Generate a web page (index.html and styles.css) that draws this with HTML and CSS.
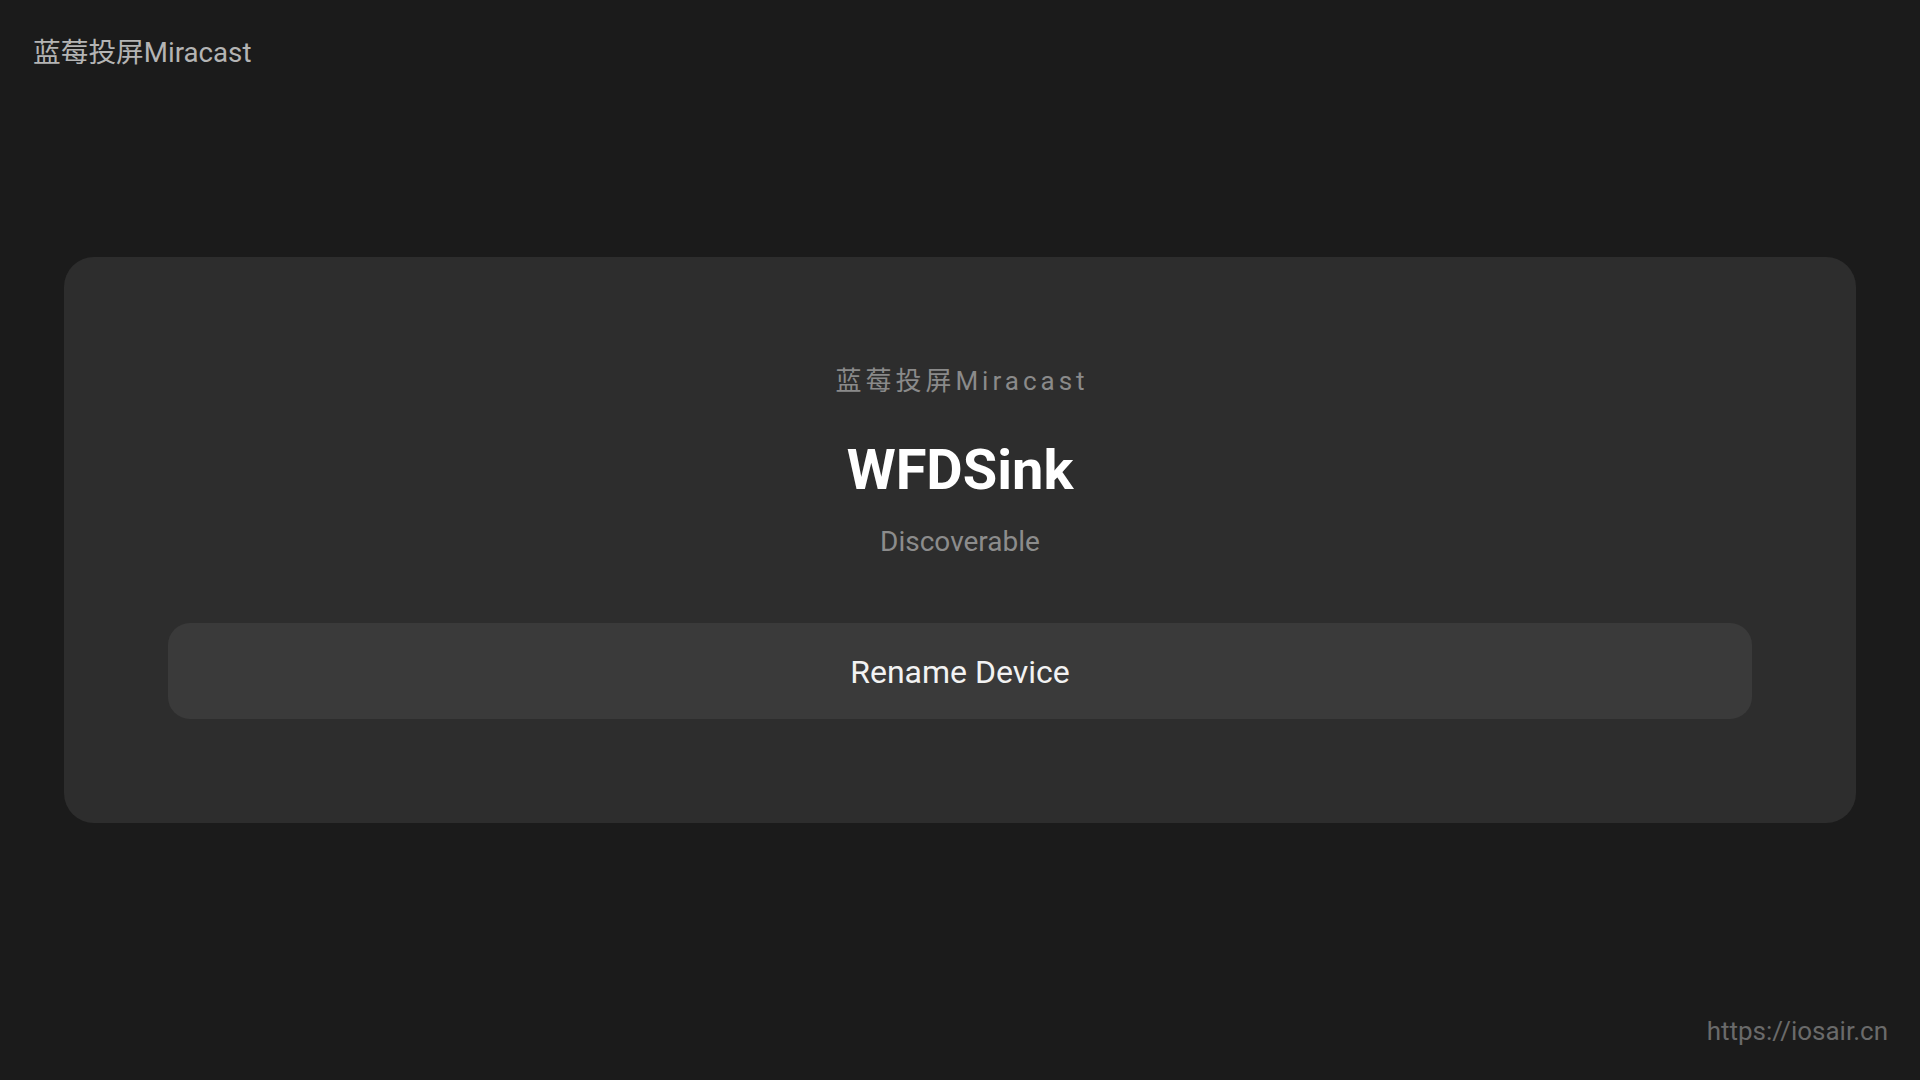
FILE: index.html
```html
<!DOCTYPE html>
<html lang="zh-CN">
<head>
<meta charset="utf-8">
<title>蓝莓投屏Miracast</title>
<link rel="stylesheet" href="styles.css">
</head>
<body>
<div class="page">
  <header class="topbar">
    <div class="app-title">蓝莓投屏Miracast</div>
  </header>
  <main class="card">
    <div class="card-sub">蓝莓投屏Miracast</div>
    <div class="device-name">WFDSink</div>
    <div class="device-status">Discoverable</div>
    <button class="rename-btn">Rename Device</button>
  </main>
  <footer class="footer">
    <span class="footer-link">https://iosair.cn</span>
  </footer>
</div>
</body>
</html>
```

FILE: styles.css
```css
* { box-sizing: border-box; }
html, body {
  margin: 0;
  padding: 0;
  background: #1b1b1b;
  font-family: Roboto, "Noto Sans CJK SC", sans-serif;
}
.page {
  height: 100vh;
  display: flex;
  flex-direction: column;
}
.topbar {
  padding: 35px 33px 0;
}
.app-title {
  font-size: 27.7px;
  line-height: 36px;
  color: #b4b4b4;
}
.card {
  margin: 186px 64px 0;
  height: 566px;
  background: #2d2d2d;
  border-radius: 30px;
  padding: 108px 104px 104px;
  display: flex;
  flex-direction: column;
  align-items: center;
}
.card-sub {
  font-size: 26px;
  line-height: 32px;
  letter-spacing: 4px;
  padding-left: 4px;
  color: #8a8a8a;
}
.device-name {
  margin-top: 41px;
  font-size: 56px;
  line-height: 64px;
  font-weight: 700;
  color: #ffffff;
}
.device-status {
  margin-top: 23px;
  font-size: 28px;
  line-height: 34px;
  color: #8c8c8c;
}
.rename-btn {
  margin-top: 64px;
  width: 100%;
  height: 96px;
  border: none;
  border-radius: 22px;
  background: #3a3a3a;
  color: #f2f2f2;
  font-family: Roboto, "Noto Sans CJK SC", sans-serif;
  font-size: 32px;
  line-height: 98px;
  padding: 0;
}
.footer {
  margin-top: auto;
  display: flex;
  justify-content: flex-end;
  padding: 0 32px 32px;
}
.footer-link {
  font-size: 26px;
  line-height: 34px;
  color: #6a6a6a;
}
```
